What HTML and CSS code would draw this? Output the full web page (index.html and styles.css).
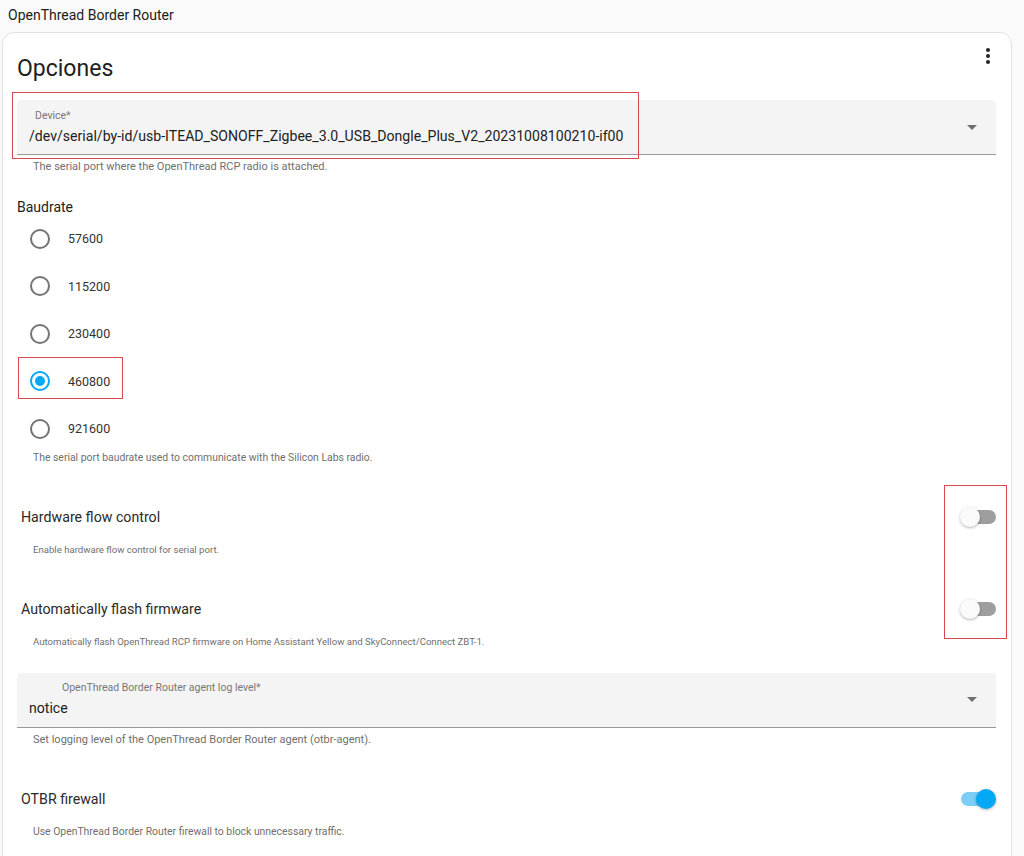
FILE: index.html
```html
<!DOCTYPE html>
<html lang="es">
<head>
<meta charset="utf-8">
<title>OpenThread Border Router</title>
<link rel="stylesheet" href="styles.css">
</head>
<body>
<div class="topbar">OpenThread Border Router</div>
<div class="card">
  <div class="card-header">
    <h1 class="title">Opciones</h1>
    <svg class="menu" viewBox="0 0 24 24" width="24" height="24"><path d="M12,16A2,2 0 0,1 14,18A2,2 0 0,1 12,20A2,2 0 0,1 10,18A2,2 0 0,1 12,16M12,10A2,2 0 0,1 14,12A2,2 0 0,1 12,14A2,2 0 0,1 10,12A2,2 0 0,1 12,10M12,4A2,2 0 0,1 14,6A2,2 0 0,1 12,8A2,2 0 0,1 10,6A2,2 0 0,1 12,4Z" fill="#212121"/></svg>
  </div>

  <div class="select">
    <div class="select-text">
      <div class="select-label">Device*</div>
      <div class="select-value">/dev/serial/by-id/usb-ITEAD_SONOFF_Zigbee_3.0_USB_Dongle_Plus_V2_20231008100210-if00</div>
    </div>
    <span class="caret"></span>
  </div>
  <div class="helper helper-lg">The serial port where the OpenThread RCP radio is attached.</div>

  <div class="group-label">Baudrate</div>
  <div class="radios">
    <div class="radio-row"><span class="radio"></span><span class="radio-text">57600</span></div>
    <div class="radio-row"><span class="radio"></span><span class="radio-text">115200</span></div>
    <div class="radio-row"><span class="radio"></span><span class="radio-text">230400</span></div>
    <div class="radio-row"><span class="radio checked"></span><span class="radio-text">460800</span></div>
    <div class="radio-row"><span class="radio"></span><span class="radio-text">921600</span></div>
  </div>
  <div class="helper helper-tight helper-md">The serial port baudrate used to communicate with the Silicon Labs radio.</div>

  <div class="toggle-row">
    <span class="toggle-label">Hardware flow control</span>
    <span class="switch"><span class="track"></span><span class="thumb"></span></span>
  </div>
  <div class="helper helper-toggle">Enable hardware flow control for serial port.</div>

  <div class="toggle-row">
    <span class="toggle-label">Automatically flash firmware</span>
    <span class="switch"><span class="track"></span><span class="thumb"></span></span>
  </div>
  <div class="helper helper-toggle">Automatically flash OpenThread RCP firmware on Home Assistant Yellow and SkyConnect/Connect ZBT-1.</div>

  <div class="select select-log">
    <div class="select-text">
      <div class="select-label label-log">OpenThread Border Router agent log level*</div>
      <div class="select-value">notice</div>
    </div>
    <span class="caret"></span>
  </div>
  <div class="helper helper-lg">Set logging level of the OpenThread Border Router agent (otbr-agent).</div>

  <div class="toggle-row">
    <span class="toggle-label">OTBR firewall</span>
    <span class="switch on"><span class="track"></span><span class="thumb"></span></span>
  </div>
  <div class="helper helper-toggle helper-md">Use OpenThread Border Router firewall to block unnecessary traffic.</div>
</div>

<div class="mark mark-device"></div>
<div class="mark mark-radio"></div>
<div class="mark mark-switch"></div>
</body>
</html>
```

FILE: styles.css
```css
html, body {
  margin: 0;
  padding: 0;
}
body {
  position: relative;
  background: #fafafa;
  font-family: Roboto, "Liberation Sans", Arial, sans-serif;
  color: #212121;
  height: 856px;
  overflow: hidden;
}
.topbar {
  height: 32px;
  line-height: 30px;
  padding-left: 8px;
  font-size: 14px;
  color: #212121;
}
.card {
  box-sizing: border-box;
  margin-left: 2px;
  width: 1010px;
  background: #fff;
  border: 1px solid #e2e2e2;
  border-radius: 12px 12px 0 0;
  padding: 11px 15px 60px 14px;
}
.card-header {
  display: flex;
  justify-content: space-between;
  align-items: flex-start;
  height: 40px;
}
.title {
  margin: 9px 0 0 0;
  font-size: 23px;
  font-weight: 400;
  line-height: 32px;
  color: #212121;
}
.menu {
  display: block;
  margin-right: -4px;
}
.select {
  margin-top: 16px;
  display: flex;
  align-items: center;
  height: 54px;
  background: #f4f4f4;
  border-bottom: 1px solid #9a9a9a;
  border-radius: 4px 4px 0 0;
}
.select-text {
  flex: 1;
  padding-left: 12px;
}
.select-label {
  margin-left: 6px;
  font-size: 10.5px;
  line-height: 12px;
  color: #777;
}
.label-log {
  margin-left: 33px;
}
.select-value {
  margin-top: 5px;
  font-size: 14.1px;
  line-height: 18px;
  color: #212121;
  white-space: nowrap;
}
.caret {
  width: 0;
  height: 0;
  border-left: 5px solid transparent;
  border-right: 5px solid transparent;
  border-top: 5px solid #707070;
  margin-right: 19px;
}
.select-log {
  margin-top: 25px;
}
.helper {
  margin-top: 6px;
  padding-left: 16px;
  font-size: 9.6px;
  line-height: 12px;
  color: #6f6f6f;
}
.helper-lg {
  font-size: 11px;
}
.helper-md {
  font-size: 10.4px;
}
.helper-tight {
  margin-top: -1px;
}
.helper-toggle {
  margin-top: 9px;
}
.group-label {
  margin-top: 25px;
  font-size: 14px;
  line-height: 18px;
  color: #212121;
}
.radios {
  display: flex;
  flex-direction: column;
  margin-top: -1px;
}
.radio-row {
  display: flex;
  align-items: center;
  height: 47.5px;
}
.radio {
  box-sizing: border-box;
  width: 20px;
  height: 20px;
  margin-left: 13px;
  border: 2px solid #737373;
  border-radius: 50%;
  display: flex;
  align-items: center;
  justify-content: center;
}
.radio.checked {
  border-color: #03a9f4;
}
.radio.checked::after {
  content: "";
  width: 10px;
  height: 10px;
  border-radius: 50%;
  background: #03a9f4;
}
.radio-text {
  margin-left: 18px;
  font-size: 12.5px;
  color: #333;
}
.toggle-row {
  margin-top: 35px;
  height: 36px;
  display: flex;
  align-items: center;
  justify-content: space-between;
  padding-left: 4px;
}
.toggle-label {
  font-size: 14.2px;
  color: #2a2a2a;
}
.switch {
  position: relative;
  width: 36px;
  height: 20px;
}
.track {
  position: absolute;
  left: 1px;
  right: 0;
  top: 3px;
  height: 14px;
  border-radius: 7px;
  background: #9e9e9e;
}
.thumb {
  position: absolute;
  top: 0;
  left: 0;
  width: 20px;
  height: 20px;
  border-radius: 50%;
  background: #fafafa;
  box-shadow: 0 1px 3px rgba(0,0,0,0.3);
}
.switch.on .track {
  right: 4px;
  background: #7ccdf7;
}
.switch.on .thumb {
  left: 16px;
  background: #03a9f4;
}
.mark {
  position: absolute;
  border: 1px solid #d9484f;
  box-sizing: border-box;
}
.mark-device {
  left: 12px;
  top: 92px;
  width: 627px;
  height: 67px;
}
.mark-radio {
  left: 18px;
  top: 357px;
  width: 105px;
  height: 42px;
}
.mark-switch {
  left: 944px;
  top: 485px;
  width: 63px;
  height: 154px;
}
```
